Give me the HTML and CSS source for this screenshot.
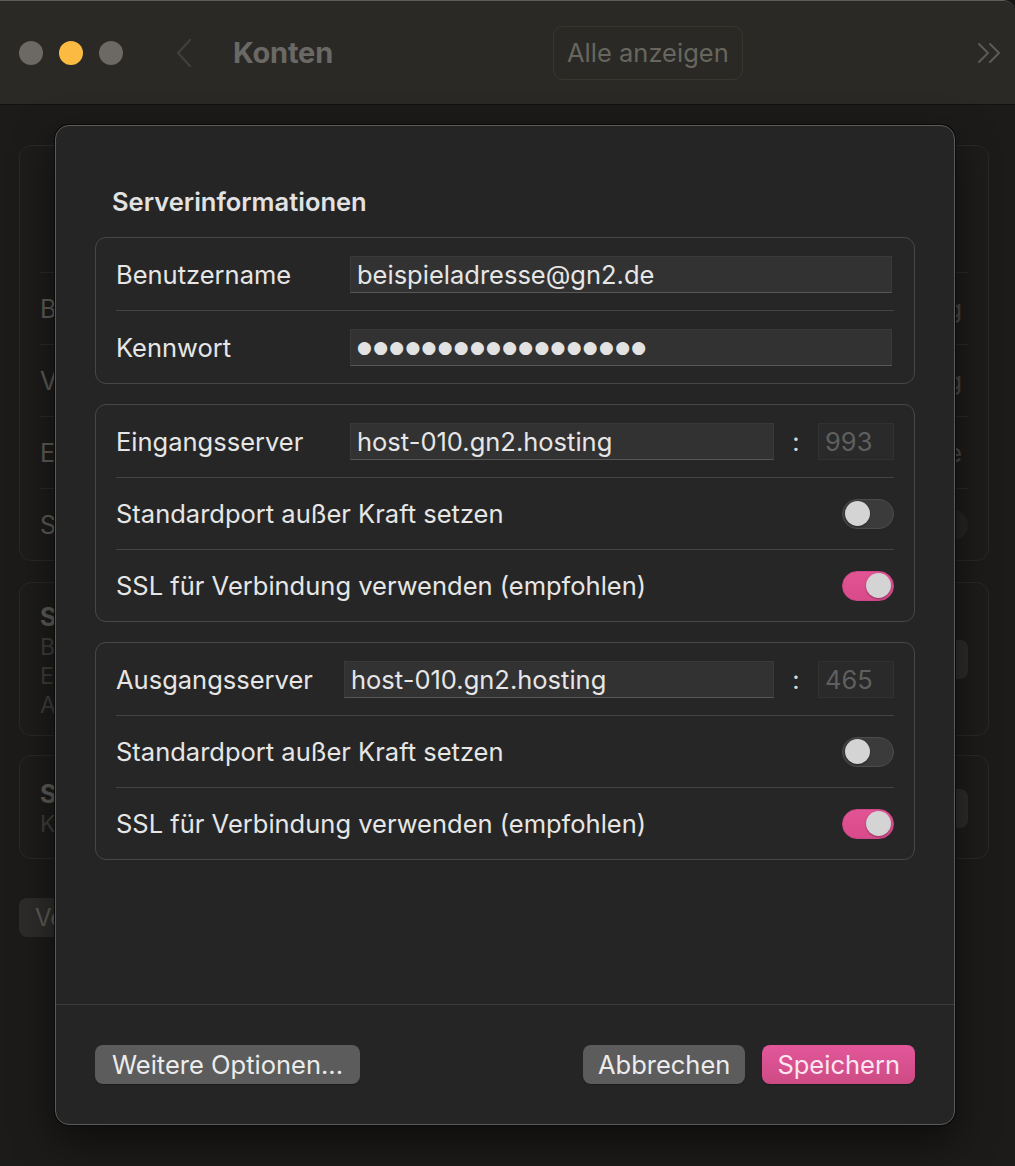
FILE: index.html
```html
<!DOCTYPE html>
<html lang="de">
<head>
<meta charset="utf-8">
<title>Konten</title>
<link rel="stylesheet" href="styles.css">
</head>
<body>
<div class="window">
  <header class="titlebar">
    <div class="lights">
      <span class="light"></span>
      <span class="light light-yellow"></span>
      <span class="light"></span>
    </div>
    <svg class="nav-back" width="20" height="30" viewBox="0 0 20 30" aria-hidden="true">
      <path d="M16 2 L4 15 L16 28" fill="none" stroke="currentColor" stroke-width="2.4" stroke-linecap="round" stroke-linejoin="round"/>
    </svg>
    <h1 class="window-title">Konten</h1>
    <button class="show-all">Alle anzeigen</button>
    <svg class="nav-more" width="26" height="22" viewBox="0 0 26 22" aria-hidden="true">
      <path d="M2 2 L11 11 L2 20 M13 2 L22 11 L13 20" fill="none" stroke="currentColor" stroke-width="2" stroke-linecap="round" stroke-linejoin="round"/>
    </svg>
  </header>

  <main class="content">
    <section class="card card-account">
      <div class="card-head"></div>
      <div class="list-row"><span>Beschreibung</span><span class="value">GN2 Hosting</span></div>
      <div class="list-row"><span>Vollständiger Name</span><span class="value">GN2 Hosting</span></div>
      <div class="list-row"><span>E-Mail</span><span class="value">Keine</span></div>
      <div class="list-row"><span>Status</span><span class="mini-switch"></span></div>
    </section>

    <section class="card card-info">
      <div class="info-text">
        <div class="info-title">Server</div>
        <div class="info-line">Benutzer</div>
        <div class="info-line">Ein</div>
        <div class="info-line">Ausgang</div>
      </div>
      <button class="bg-button">Info</button>
    </section>

    <section class="card card-info card-short">
      <div class="info-text">
        <div class="info-title">Sicherheit</div>
        <div class="info-line">Konto</div>
      </div>
      <button class="bg-button">Ändern</button>
    </section>

    <button class="bg-button bg-button-left">Verbindung testen</button>
  </main>

  <div class="sheet">
    <div class="sheet-body">
      <h2 class="sheet-title">Serverinformationen</h2>

      <div class="group group-login">
        <div class="row">
          <span class="label">Benutzername</span>
          <span class="field field-wide">beispieladresse@gn2.de</span>
        </div>
        <div class="row">
          <span class="label">Kennwort</span>
          <span class="field field-wide"><span class="dots">●●●●●●●●●●●●●●●●●●</span></span>
        </div>
      </div>

      <div class="group">
        <div class="row">
          <span class="label">Eingangsserver</span>
          <span class="field field-host">host-010.gn2.hosting</span>
          <span class="colon">:</span>
          <span class="field field-port">993</span>
        </div>
        <div class="row">
          <span class="label label-grow">Standardport außer Kraft setzen</span>
          <span class="switch"><span class="knob"></span></span>
        </div>
        <div class="row">
          <span class="label label-grow">SSL für Verbindung verwenden (empfohlen)</span>
          <span class="switch switch-on"><span class="knob"></span></span>
        </div>
      </div>

      <div class="group">
        <div class="row">
          <span class="label label-narrow">Ausgangsserver</span>
          <span class="field field-host field-host-long">host-010.gn2.hosting</span>
          <span class="colon">:</span>
          <span class="field field-port">465</span>
        </div>
        <div class="row">
          <span class="label label-grow">Standardport außer Kraft setzen</span>
          <span class="switch"><span class="knob"></span></span>
        </div>
        <div class="row">
          <span class="label label-grow">SSL für Verbindung verwenden (empfohlen)</span>
          <span class="switch switch-on"><span class="knob"></span></span>
        </div>
      </div>
    </div>

    <footer class="sheet-footer">
      <button class="btn btn-wide">Weitere Optionen...</button>
      <span class="footer-gap"></span>
      <button class="btn">Abbrechen</button>
      <button class="btn btn-primary">Speichern</button>
    </footer>
  </div>
</div>
</body>
</html>
```

FILE: styles.css
```css
* {
  box-sizing: border-box;
}

html,
body {
  margin: 0;
  padding: 0;
  background: #171615;
}

body {
  width: 1015px;
  height: 1166px;
  overflow: hidden;
  font-family: "Inter", "Liberation Sans", sans-serif;
  -webkit-font-smoothing: antialiased;
}

button {
  font-family: inherit;
  border: 0;
  margin: 0;
  cursor: default;
}

.window {
  position: relative;
  width: 1015px;
  height: 1166px;
  background: #1c1b19;
  border-top: 1px solid #5e5d5a;
  border-top-right-radius: 12px;
  overflow: hidden;
}

/* ---- title bar ---- */

.titlebar {
  height: 104px;
  display: flex;
  align-items: center;
  padding: 0 0 0 19px;
  background: #2a2925;
  border-bottom: 1px solid #121211;
}

.lights {
  display: flex;
  gap: 16px;
}

.light {
  width: 24px;
  height: 24px;
  border-radius: 50%;
  background: #6c6864;
}

.light-yellow {
  background: #fbbb42;
}

.nav-back {
  margin-left: 51px;
  color: #403f3b;
}

.window-title {
  margin: 0 0 0 39px;
  font-size: 29px;
  font-weight: 700;
  color: #6a6965;
  letter-spacing: -0.2px;
}

.show-all {
  margin-left: 220px;
  height: 54px;
  padding: 0 13px;
  border: 1px solid #38372f;
  border-radius: 10px;
  background: transparent;
  color: #67665f;
  font-size: 25.5px;
}

.nav-more {
  margin-left: auto;
  margin-right: 12px;
  color: #5c5b57;
}

/* ---- settings content behind the sheet ---- */

.content {
  padding: 40px 26px 0 19px;
  display: flex;
  flex-direction: column;
  align-items: flex-start;
  color: #5d5c59;
}

.card {
  width: 100%;
  border: 1px solid #2a2927;
  border-radius: 12px;
  background: #1d1c1a;
}

.card-account {
  padding: 0 20px;
}

.card-head {
  height: 126px;
}

.list-row {
  height: 72px;
  border-top: 1px solid #2b2a28;
  display: flex;
  align-items: center;
  justify-content: space-between;
  font-size: 25px;
}

.value {
  margin-right: 6px;
  color: #4a4947;
}

.mini-switch {
  width: 44px;
  height: 30px;
  border-radius: 15px;
  background: #262523;
}

.card-info {
  margin-top: 21px;
  height: 154px;
  padding: 18px 20px 0;
  display: flex;
  justify-content: space-between;
}

.card-short {
  margin-top: 19px;
  height: 104px;
  padding-top: 22px;
}

.info-title {
  font-size: 25px;
  font-weight: 700;
  line-height: 32px;
}

.info-line {
  font-size: 23px;
  line-height: 29px;
  color: #3f3e3c;
}

.bg-button {
  align-self: center;
  height: 39px;
  padding: 0 16px;
  border-radius: 8px;
  background: #2d2c2a;
  color: #5d5c59;
  font-size: 24px;
  margin-right: 0;
}

.card-info .bg-button {
  margin-top: -18px;
}

.card-short .bg-button {
  margin-top: -20px;
}

.bg-button-left {
  margin-top: 39px;
  align-self: flex-start;
}

/* ---- sheet ---- */

.sheet {
  position: absolute;
  left: 55px;
  top: 124px;
  width: 900px;
  height: 1000px;
  display: flex;
  flex-direction: column;
  background: #252525;
  border: 1px solid #5b5b5b;
  border-radius: 14px;
  box-shadow: 0 0 0 1px #0a0a0a, 0 16px 40px rgba(0, 0, 0, 0.55);
  color: #e4e4e4;
}

.sheet-body {
  flex: 1;
  padding: 60px 39px 0;
  display: flex;
  flex-direction: column;
  gap: 20px;
}

.sheet-title {
  margin: 0 0 -1px 17px;
  font-size: 25.5px;
  font-weight: 600;
  line-height: 32px;
  color: #e2e2e2;
}

.group {
  border: 1px solid #474747;
  border-radius: 11px;
  padding: 0 20px;
  background: #262626;
}

.row {
  height: 72px;
  display: flex;
  align-items: center;
  font-size: 25.5px;
}

.row + .row {
  border-top: 1px solid #434343;
}

.group-login .row + .row {
  height: 73px;
}

.label {
  width: 234px;
  flex: none;
  color: #e6e6e6;
}

.label-narrow {
  width: 228px;
}

.label-grow {
  flex: 1;
  width: auto;
}

.field {
  height: 37px;
  display: flex;
  align-items: center;
  padding: 0 6px;
  background: #323232;
  border: 1px solid #393939;
  border-bottom-color: #575757;
  color: #e6e6e6;
  font-size: 25.5px;
  white-space: nowrap;
}

.field-wide {
  flex: 1;
  margin-right: 2px;
}

.field-host {
  width: 424px;
}

.field-host-long {
  width: 430px;
}

.colon {
  width: 44px;
  text-align: center;
  color: #d8d8d8;
}

.field-port {
  width: 76px;
  background: #2a2a2a;
  border-color: #313131;
  color: #5f5f5f;
}

.dots {
  font-family: "DejaVu Sans", sans-serif;
  font-size: 17px;
  letter-spacing: 1.3px;
  color: #e2e2e2;
}

/* toggle switches */

.switch {
  width: 52px;
  height: 30px;
  flex: none;
  display: flex;
  align-items: center;
  padding: 0 2px;
  border-radius: 15px;
  background: #3b3b3b;
  border: 1px solid #4b4b4b;
}

.switch-on {
  justify-content: flex-end;
  background: linear-gradient(#e25595, #d84a8a);
  border-color: #d0468a;
}

.knob {
  width: 25px;
  height: 25px;
  border-radius: 50%;
  background: #d4d4d4;
  box-shadow: 0 1px 2px rgba(0, 0, 0, 0.35);
}

/* footer buttons */

.sheet-footer {
  height: 120px;
  display: flex;
  align-items: center;
  gap: 17px;
  padding: 0 39px 1px;
  border-top: 1px solid #3b3b3b;
}

.footer-gap {
  flex: 1;
}

.btn {
  height: 39px;
  padding: 0 15px;
  border-radius: 8px;
  background: #5c5c5c;
  color: #ececec;
  font-size: 25.5px;
  box-shadow: 0 1px 1px rgba(0, 0, 0, 0.25);
}

.btn-wide {
  padding: 0 17px;
}

.btn-primary {
  background: linear-gradient(#e3579a, #cd4b84);
  color: #fbe6f0;
}
```
